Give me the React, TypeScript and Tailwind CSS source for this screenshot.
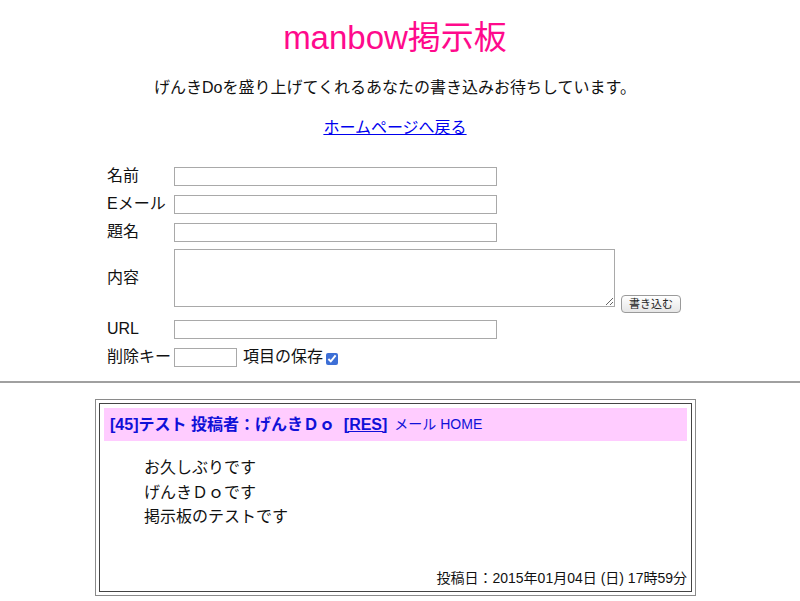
const font = '[font-family:"Liberation_Sans","Noto_Sans_CJK_JP",sans-serif]'

const FormRow = ({ label, children }: { label: string; children: React.ReactNode }) => (
  <div className="flex h-[28px] items-center">
    <span className="w-[67px] shrink-0 text-[16px] leading-none">{label}</span>
    {children}
  </div>
)

const TextInput = ({ width = 'w-[323px]' }: { width?: string }) => (
  <input
    className={`${width} h-[19px] border border-[#a9a9a9] bg-white px-1 text-[13px] outline-none`}
    type="text"
  />
)

export default function App() {
  return (
    <div className={`${font} min-h-[601px] w-[800px] bg-white text-[#111]`}>
      <header className="w-[790px] text-center">
        <h1 className="pt-[18px] text-[33px] leading-[40px] text-[#ff0a8c]">manbow掲示板</h1>
        <p className="mt-[18px] text-[16px] leading-[24px]">
          げんきDoを盛り上げてくれるあなたの書き込みお待ちしています。
        </p>
        <p className="mt-[16px] text-[16px] leading-[24px]">
          <a className="text-[#0000ee] underline" href="#">
            ホームページへ戻る
          </a>
        </p>
      </header>

      <form className="ml-[107px] mt-[22px]">
        <FormRow label="名前">
          <TextInput />
        </FormRow>
        <FormRow label="Eメール">
          <TextInput />
        </FormRow>
        <FormRow label="題名">
          <TextInput />
        </FormRow>
        <div className="flex h-[69px] items-start">
          <span className="flex h-[64px] w-[67px] shrink-0 items-center text-[16px] leading-none">
            内容
          </span>
          <div className="flex items-end gap-[6px] pt-[3px]">
            <textarea className="h-[58px] w-[441px] border border-[#a9a9a9] bg-white outline-none" />
            <button
              className="mb-[-6px] h-[18px] rounded-[4px] border border-[#9a9a9a] bg-gradient-to-b from-white to-[#e6e6e6] px-[7px] text-[11px] leading-none text-[#222]"
              type="button"
            >
              書き込む
            </button>
          </div>
        </div>
        <FormRow label="URL">
          <TextInput />
        </FormRow>
        <div className="flex h-[28px] items-center">
          <span className="w-[67px] shrink-0 text-[16px] leading-none">削除キー</span>
          <TextInput width="w-[63px]" />
          <span className="ml-[6px] text-[16px] leading-none">項目の保存</span>
          <input
            checked
            className="ml-[3px] mt-[3px] h-[12px] w-[12px] accent-[#3d6fd6]"
            readOnly
            type="checkbox"
          />
        </div>
      </form>

      <hr className="mt-[10px] border-0 border-t-2 border-t-[#a0a0a0]" />

      <section className="ml-[95px] mt-[16px] w-[601px] border border-[#8a8a8a] p-[3px]">
        <div className="border border-[#444] px-[4px] pb-[4px] pt-[4px]">
          <div className="flex h-[33px] items-center bg-[#ffccff] px-[6px] text-[#1010d8]">
            <span className="text-[16px] font-bold">
              [45]テスト 投稿者：げんきＤｏ&nbsp;&nbsp;<span className="underline">[RES]</span>
            </span>
            <span className="ml-[7px] text-[14px]">メール HOME</span>
          </div>
          <div className="mt-[15px] pl-[40px] text-[16px] leading-[24.5px]">
            <p>お久しぶりです</p>
            <p>げんきＤｏです</p>
            <p>掲示板のテストです</p>
          </div>
          <p className="mt-[39px] text-right text-[14px] leading-[18px]">
            投稿日：2015年01月04日 (日) 17時59分
          </p>
        </div>
      </section>
    </div>
  )
}
